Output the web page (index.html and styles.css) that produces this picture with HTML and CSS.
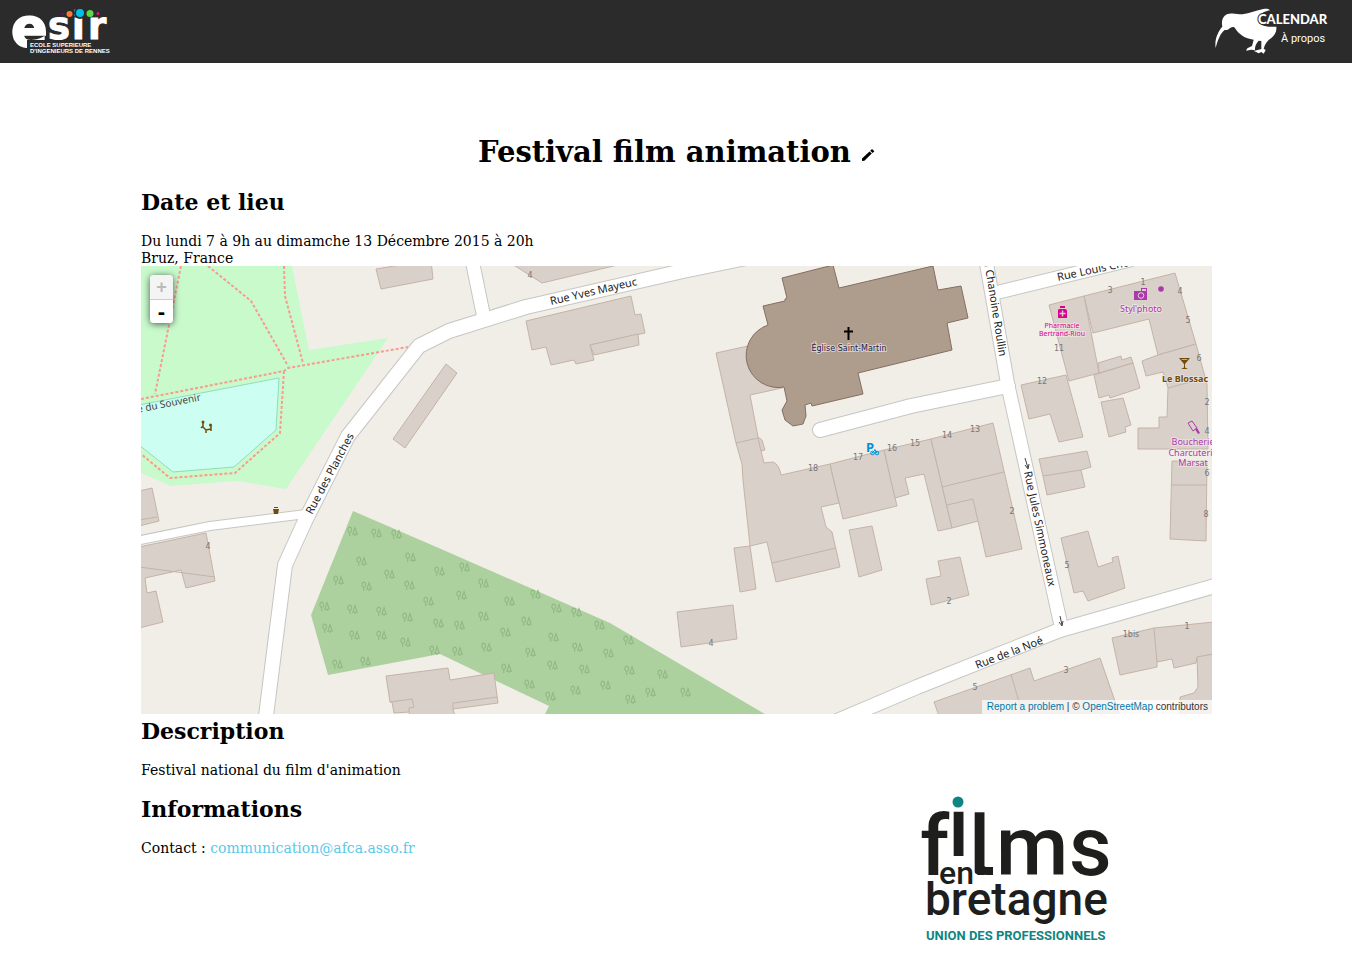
FILE: index.html
```html
<!DOCTYPE html>
<html lang="fr">
<head>
<meta charset="utf-8">
<meta name="viewport" content="width=device-width, initial-scale=1">
<title>Festival film animation</title>
<link rel="stylesheet" href="styles.css">
</head>
<body>
<header class="topbar">
  <a class="brand" href="#" aria-label="ESIR">
    <svg class="brand-logo" width="104" height="50" viewBox="10 6 104 50">
      <g class="esir-word">
        <text class="esir-e" x="11" y="46">e</text>
        <text class="esir-sir" y="39"><tspan x="48">s</tspan><tspan x="72">i</tspan><tspan x="88">r</tspan></text>
      </g>
      <rect class="bar-fill" x="27" y="40" width="86" height="14"/>
      <circle class="bar-fill" cx="80" cy="13" r="6"/>
      <circle cx="62.500" cy="14" r="1" fill="#7b1083"/>
      <circle cx="69.500" cy="14" r="3" fill="#ff7733"/>
      <circle cx="80" cy="13" r="4" fill="#00c0e8"/>
      <circle cx="90" cy="13.500" r="3.500" fill="#5cd846"/>
      <circle cx="98" cy="13.500" r="1.500" fill="#e5107c"/>
      <text class="esir-sub" x="30" y="47">ECOLE SUPERIEURE</text>
      <text class="esir-sub" x="30" y="53">D'INGENIEURS DE RENNES</text>
    </svg>
  </a>
  <a class="kiwi" href="#" aria-label="Calendar, à propos">
    <svg class="kiwi-logo" width="116" height="50" viewBox="1213 6 116 50">
      <path fill="#fff" transform="translate(1190 0) scale(.33333)" d="M77 144C73 118 84 94 97 80C93 62 99 43 118 41C134 38 146 44 158 43C178 41 200 30 220 27C230 25 238 27 240 31C220 34 203 46 205 60C207 75 222 82 259 80C261 95 254 106 244 114C232 122 225 131 221 146L227 150L221 161L214 156L206 160L192 153L214 147L214 123L206 122C198 130 194 140 195 151L184 149L168 152L172 145L186 138L191 119C164 116 147 104 133 82C122 76 118 92 104 90C90 101 83 122 77 144Z"/>
      <text class="kiwi-name" x="1258" y="24">CALENDAR</text>
      <text class="kiwi-about" x="1281" y="42">À propos</text>
    </svg>
  </a>
</header>

<main class="event">
  <h1 class="event-title">Festival film animation
    <button class="edit" type="button" aria-label="Modifier le titre"><svg width="14" height="14" viewBox="0 0 14 14"><path d="M1 10.500 8.500 3.500 10.800 5.600 3.400 12.700 1 13ZM9.200 2.800 11 1 13.400 3.200 11.500 5Z"/></svg></button>
  </h1>

  <section class="block">
    <h2 class="heading">Date et lieu</h2>
    <p class="text">Du lundi 7 à 9h au dimamche 13 Décembre 2015 à 20h<br>Bruz, France</p>
    <div class="map">
      <svg class="map-canvas" viewBox="141 266 1071 448" preserveAspectRatio="xMidYMid slice" role="img" aria-label="Carte de Bruz">
        <defs>
          <symbol id="trees" viewBox="0 0 10 10" width="11" height="11" overflow="visible">
            <path d="M2.500 9V5.500M7.300 9V7.500M2.500 1C.8 1 .8 3 .9 4C1 6.300 4 6.300 4.100 4C4.200 3 4.200 1 2.500 1ZM7.300 1.500 5.300 7.500H9.300Z" fill="none" stroke="#8fb882"/>
          </symbol>
        </defs>
        <path fill="#c8facc" d="M141 266H292L309 350 388 338 286 489 237 481 171 486 141 473Z"/>
        <path fill="#ccfff1" stroke="#8fdcc0" d="M139 405 279 378 276 430 234 467 173 472 139 445"/>
        <path fill="#add19e" d="M353 511 441 549 610 623 765 714H545L549 706 440 654 328 675 311 615Z"/>
        <g id="wood">
          <use href="#trees" x="347" y="526"/><use href="#trees" x="371" y="528"/><use href="#trees" x="391" y="529"/><use href="#trees" x="356" y="556"/><use href="#trees" x="405" y="552"/><use href="#trees" x="384" y="569"/><use href="#trees" x="333" y="575"/><use href="#trees" x="361" y="581"/><use href="#trees" x="404" y="580"/><use href="#trees" x="434" y="566"/><use href="#trees" x="319" y="601"/><use href="#trees" x="347" y="604"/><use href="#trees" x="376" y="606"/><use href="#trees" x="423" y="596"/><use href="#trees" x="402" y="612"/><use href="#trees" x="433" y="618"/><use href="#trees" x="322" y="623"/><use href="#trees" x="349" y="630"/><use href="#trees" x="376" y="630"/><use href="#trees" x="400" y="637"/><use href="#trees" x="429" y="645"/><use href="#trees" x="332" y="659"/><use href="#trees" x="360" y="656"/>
          <use href="#trees" x="459" y="562"/><use href="#trees" x="478" y="578"/><use href="#trees" x="456" y="590"/><use href="#trees" x="504" y="596"/><use href="#trees" x="530" y="589"/><use href="#trees" x="551" y="603"/><use href="#trees" x="571" y="607"/><use href="#trees" x="478" y="611"/><use href="#trees" x="521" y="616"/><use href="#trees" x="454" y="620"/><use href="#trees" x="500" y="627"/><use href="#trees" x="594" y="620"/><use href="#trees" x="548" y="632"/><use href="#trees" x="623" y="635"/><use href="#trees" x="481" y="642"/><use href="#trees" x="572" y="642"/><use href="#trees" x="452" y="646"/><use href="#trees" x="525" y="647"/><use href="#trees" x="603" y="648"/><use href="#trees" x="547" y="660"/><use href="#trees" x="501" y="663"/><use href="#trees" x="579" y="664"/><use href="#trees" x="624" y="665"/><use href="#trees" x="657" y="669"/><use href="#trees" x="524" y="679"/><use href="#trees" x="600" y="680"/><use href="#trees" x="570" y="685"/><use href="#trees" x="645" y="687"/><use href="#trees" x="680" y="687"/><use href="#trees" x="545" y="691"/><use href="#trees" x="625" y="694"/>
        </g>
        <g class="footpath">
          <path d="M181 266 155 394M208 266 251 301 288 366M284 266 285 296 303 363M141 399 284 371 288 368 408 347M284 371 280 433 235 473 170 478 141 454"/>
        </g>
        <g class="building">
          <path d="M376 269 431 260 433 279 381 289Z"/>
          <path d="M512 264 542 283 622 264Z"/>
          <path d="M526 321 631 296 635 315 641 314 645 333 590 345 594 360 576 364 574 360 551 365 546 347 532 350Z"/>
          <path d="M590 345 638 334 639 345 594 355Z"/>
          <path d="M393 439 405 448 457 373 446 364Z"/>
          <path d="M716 353 748 346 790 370 782 388 750 395 758 437 762 440 765 450 761 451 764 463 773 462Q779 464 781 475L830 464 839 503 821 507 826 527 832 532 840 567 776 582 767 542 750 546 743 480 742 464 736 443Z"/>
          <path class="seam" d="M736 443 758 438 761 451M772 563 836 548"/>
          <path d="M734 548 750 546 756 589 740 592Z"/>
          <path d="M830 464 884 450 897 506 843 519Z"/>
          <path d="M884 450 931 439 952 528 938 531 924 474 905 478 909 494 895 498Z"/>
          <path d="M931 439 993 423 1022 549 986 557 978 521 952 528Z"/>
          <path class="seam" d="M942 487 1004 472M947 505 973 499 978 521"/>
          <path d="M849 530 872 526 882 570 859 577Z"/>
          <path d="M938 561 960 557 969 595 931 605 926 579 941 576Z"/>
          <path d="M677 612 733 605 737 639 681 647Z"/>
          <path d="M386 676 448 668 450 680 494 673 498 703 453 709 455 716 410 716 409 712 394 713 392 702 390 702Z"/>
          <path class="seam" d="M390 702 412 699 414 707 409 708V712M453 709V703L497 697"/>
          <path d="M139 491 152 488 159 521 139 526Z"/>
          <path class="seam" d="M139 520 157 517"/>
          <path d="M139 547 206 533 215 581 186 588 181 570 145 578 147 593 156 591 163 622 139 628Z"/>
          <path class="seam" d="M139 567 215 577"/>
          <path d="M1049 305 1084 296 1099 373 1069 381Z"/>
          <path d="M1084 296 1175 273 1196 344 1158 355 1149 319 1093 333Z"/>
          <path d="M1098 363 1121 356 1122 360 1131 357 1133 363 1099 373Z"/>
          <path d="M1094 375 1133 363 1140 388 1110 398 1109 395 1099 398Z"/>
          <path d="M1101 402 1123 398 1131 425 1125 427 1126 432 1109 437Z"/>
          <path d="M1021 385 1066 375 1083 437 1059 442 1050 414 1029 419Z"/>
          <path d="M1142 361 1158 355 1196 344 1207 384 1208 449H1138V428H1159V417H1167L1168 388 1163 372 1146 376Z"/>
          <path class="seam" d="M1168 388 1205 378"/>
          <path d="M1172 461H1207L1206 541 1170 539Z"/>
          <path class="seam" d="M1172 485H1207"/>
          <path d="M1039 459 1087 451 1091 467 1081 470 1085 487 1047 495 1043 476Z"/>
          <path class="seam" d="M1043 476 1081 470"/>
          <path d="M1061 538 1088 531 1098 567 1113 562 1112 558 1118 556 1125 588 1088 601 1083 591 1074 593Z"/>
          <path d="M1112 638 1154 628 1214 622V654L1197 657 1196 663 1174 668 1172 659 1157 662V667L1120 675Z"/>
          <path class="seam" d="M1154 628 1157 662"/>
          <path d="M1214 654 1197 657 1198 687 1194 693 1180 697V716H1214Z"/>
          <path d="M934 702 1030 668 1034 681 1100 658 1117 707 1120 716H939Z"/>
          <path class="seam" d="M1011 674 1023 716"/>
        </g>
        <path class="church" d="M782 278 833 265 839 288 933 266 938 290 961 286 968 318 947 323 952 350 858 373 863 394 812 406 811 403 805 405 806 416 803 424 793 426 785 420 782 410 787 401 784 387A32.100 32.100 0 0 1 768 325L763 306 785 301V299L787 298Z"/>
        <g class="road road-case">
          <path class="w-main" d="M265 724 285 565 306 519 348 436 419 346 449 331 526 307 683 271 770 253"/>
          <path class="w-mid" d="M471 255 484 318M985 255 1008 386 1062 630M995 293 1130 260"/>
          <path class="w-small" d="M131 542 210 526 306 514"/>
          <path class="w-main" d="M820 430 911 406 1008 386M830 724 917 687 1060 630 1222 584"/>
        </g>
        <g class="road road-fill">
          <path class="w-main" d="M265 724 285 565 306 519 348 436 419 346 449 331 526 307 683 271 770 253"/>
          <path class="w-mid" d="M471 255 484 318M985 255 1008 386 1062 630M995 293 1130 260"/>
          <path class="w-small" d="M131 542 210 526 306 514"/>
          <path class="w-main" d="M820 430 911 406 1008 386M830 724 917 687 1060 630 1222 584"/>
        </g>
        <g class="street">
          <text transform="translate(551 305) rotate(-13)">Rue Yves Mayeuc</text>
          <text transform="translate(312 515) rotate(-62)">Rue des Planches</text>
          <text transform="translate(1058 281) rotate(-12)">Rue Louis Chevalier</text>
          <text transform="translate(983 254) rotate(81)">du Chanoine Roullin</text>
          <text transform="translate(1024 472) rotate(78)">Rue Jules Simmoneaux</text>
          <text transform="translate(977 669) rotate(-21)">Rue de la Noé</text>
          <text class="path-name" transform="translate(121 416) rotate(-11)">Allée du Souvenir</text>
        </g>
        <path class="arrow" d="M1025 458 1028 468M1025 465 1028 469 1029 464M1060 616 1062 625M1059 622 1062 626 1063 621"/>
        <g class="number">
          <text x="530" y="278">4</text><text x="208" y="549">4</text><text x="711" y="646">4</text>
          <text x="813" y="471">18</text><text x="858" y="460">17</text><text x="892" y="451">16</text><text x="915" y="446">15</text><text x="947" y="438">14</text><text x="975" y="432">13</text>
          <text x="1012" y="514">2</text><text x="949" y="604">2</text><text x="1067" y="568">5</text><text x="1042" y="384">12</text><text x="1059" y="351">11</text>
          <text x="1110" y="293">3</text><text x="1143" y="285">1</text><text x="1180" y="294">4</text><text x="1188" y="323">5</text><text x="1199" y="361">6</text><text x="1207" y="405">2</text><text x="1207" y="434">4</text><text x="1207" y="476">6</text><text x="1206" y="517">8</text>
          <text x="1131" y="637">1bis</text><text x="1187" y="629">1</text><text x="1066" y="673">3</text><text x="975" y="690">5</text>
        </g>
        <path d="M848.500 327V340M844 331.500H853" stroke="#000" stroke-width="2" fill="none"/>
        <text class="poi poi-church" x="849" y="351">Église Saint-Martin</text>
        <g class="c-pharmacy">
          <path fill-rule="evenodd" d="M1060 306H1065V308H1060ZM1058 310Q1058 309 1060 309H1065Q1067 309 1067 311V318H1058ZM1061.800 310.500V312.800H1059.500V314.300H1061.800V316.500H1063.300V314.300H1065.600V312.800H1063.300V310.500Z"/>
          <text class="poi poi-small" x="1062" y="328">Pharmacie</text>
          <text class="poi poi-small" x="1062" y="336">Bertrand-Riou</text>
        </g>
        <g class="c-shop">
          <path d="M1134 291H1141V288H1147V300H1134Z"/>
          <path fill="#d9d0c9" d="M1142 289H1146V291H1142Z"/>
          <circle cx="1141" cy="295.500" r="2.800" fill="none" stroke="#e6d3e2"/>
          <circle cx="1161" cy="289" r="2.800"/>
          <text class="poi poi-mid" x="1141" y="312">Styl'photo</text>
          <path fill="none" stroke="#ac39ac" d="M1188 423 1192 421 1197 428 1193 431Z"/>
          <path d="M1195 429 1197 428 1200 433 1198 434Z"/>
          <text class="poi poi-mid" x="1193" y="445">Boucherie</text>
          <text class="poi poi-mid" x="1193" y="456">Charcuterie</text>
          <text class="poi poi-mid" x="1193" y="466">Marsat</text>
        </g>
        <g class="c-bar">
          <path fill-rule="evenodd" d="M1179 358H1190L1185 364V367.500L1188 369H1181L1184 367.500V364ZM1181.500 359.300 1182 360H1187L1187.500 359.300Z"/>
          <text class="poi poi-bold" x="1185" y="382">Le Blossac</text>
          <path d="M273 509H279L278 514H274ZM274 507H278V508H274Z"/>
          <path fill="none" stroke="#734a08" stroke-width="1.500" d="M203 422V426L201 428M203 427 206 430 211 429M211 425V431M206 430V433"/>
          <circle cx="203" cy="422" r="1.500"/><circle cx="210.500" cy="425" r="1.500"/>
        </g>
        <text class="parking" x="866" y="452">P</text>
        <g fill="none" stroke="#0092da"><circle cx="872.500" cy="453" r="1.800"/><circle cx="877" cy="453" r="1.800"/><path d="M872 453 875 450 877 453M874 450H876"/></g>
      </svg>
      <div class="zoom">
        <button class="zoom-btn" type="button" aria-label="Zoom avant" disabled>+</button>
        <button class="zoom-btn" type="button" aria-label="Zoom arrière">-</button>
      </div>
      <div class="credit"><a href="#">Report a problem</a> | © <a href="#">OpenStreetMap</a> contributors</div>
    </div>
  </section>

  <section class="block block-desc">
    <h2 class="heading">Description</h2>
    <p class="text">Festival national du film d'animation</p>
  </section>

  <section class="block block-info">
    <div class="info">
      <h2 class="heading">Informations</h2>
      <p class="text">Contact : <a class="mail" href="mailto:communication@afca.asso.fr">communication@afca.asso.fr</a></p>
    </div>
    <svg class="partner" width="200" height="160" viewBox="915 788 200 160" role="img" aria-label="Films en Bretagne">
      <g class="films">
        <text x="920" y="875">f</text>
        <text x="948" y="856">i</text>
        <text x="969" y="875">l</text>
        <text x="996" y="875">m</text>
        <text x="1069" y="875">s</text>
      </g>
      <rect x="951" y="790" width="19" height="21" fill="#fff"/>
      <path d="M979 858V863Q979 871 987 871H993" fill="none" stroke="#1e1e1c" stroke-width="8"/>
      <path d="M972 866Q973 875 982 876H972Z" fill="#fff"/>
      <circle cx="958" cy="802" r="5.500" fill="#0d8583"/>
      <text class="films-en" x="939" y="884">en</text>
      <text class="films-bzh" x="925" y="915">bretagne</text>
      <text class="films-union" x="926" y="940">UNION DES PROFESSIONNELS</text>
    </svg>
  </section>
</main>
</body>
</html>
```
FILE: styles.css
```css
* { box-sizing: border-box; }

body {
  margin: 0;
  background: #fff;
  color: #000;
  font: 14px/17px "DejaVu Serif", serif;
}

a { text-decoration: none; }
button { border: 0; padding: 0; cursor: pointer; }
svg { display: block; overflow: visible; }

/* Top bar */
.topbar {
  display: flex;
  justify-content: space-between;
  align-items: flex-start;
  height: 63px;
  padding: 6px 23px 0 10px;
  background: #2b2b2b;
}
.bar-fill { fill: #2b2b2b; }
.esir-word { fill: #fff; font-family: "DejaVu Sans", sans-serif; font-weight: 700; stroke: #fff; }
.esir-e { font-size: 54px; stroke-width: 2px; }
.esir-sir { font-size: 37px; stroke-width: 1px; }
.esir-sub { fill: #fff; font: 700 6px "Liberation Sans", sans-serif; }
.kiwi-name { fill: #fff; font: 900 13px Lato, sans-serif; stroke: #2b2b2b; stroke-width: 2px; paint-order: stroke; }
.kiwi-about { fill: #fff; font: 11px Roboto, sans-serif; }

/* Event */
.event { padding: 71px 140px 24px 141px; }
.event-title {
  margin: 0 0 20px;
  font-size: 29px;
  line-height: 36px;
  text-align: center;
}
.edit { background: none; }
.heading { margin: 0 0 19px; font-size: 22px; line-height: 24px; }
.text { margin: 0; }
.block-desc { padding-top: 5px; }
.block-info { display: flex; justify-content: space-between; padding: 9px 97px 0 0; }
.info { padding-top: 9px; }
.mail { color: #5bc8e8; }

/* Map */
.map { position: relative; height: 448px; margin-top: -1px; overflow: hidden; background: #f1eee8; }
.map-canvas { width: 100%; height: 100%; overflow: hidden; }
.building { fill: #d9d0c9; stroke: #c4b3a8; }
.seam { fill: none; }
.church { fill: #ae9c8c; stroke: #846f62; }
.footpath { fill: none; stroke: #fa9a90; stroke-width: 2px; stroke-dasharray: 3 2; }
.road { fill: none; stroke-linecap: round; stroke-linejoin: round; }
.road-case { stroke: #c6c6c4; }
.road-fill { stroke: #fff; }
.road-case .w-main { stroke-width: 16px; }
.road-case .w-mid { stroke-width: 15px; }
.road-case .w-small { stroke-width: 10px; }
.road-fill .w-main { stroke-width: 14px; }
.road-fill .w-mid { stroke-width: 13px; }
.road-fill .w-small { stroke-width: 8px; }
.street { fill: #222; font: 11px "Noto Sans", sans-serif; }
.path-name { font-size: 10px; fill: #444; }
.arrow { fill: none; stroke: #444; }
.number { fill: #777; font: 8px "DejaVu Sans", sans-serif; text-anchor: middle; }
.poi { text-anchor: middle; font-family: "Noto Sans", sans-serif; stroke: #f1eee8; stroke-opacity: .6; stroke-width: 2px; paint-order: stroke; }
.poi-church { fill: #22204f; font-size: 8px; font-family: "DejaVu Sans", sans-serif; }
.poi-small { font-size: 7px; }
.poi-mid { font-size: 9px; }
.poi-bold { font-size: 9px; font-weight: 700; }
.c-pharmacy { fill: #da0092; }
.c-shop { fill: #ac39ac; }
.c-bar { fill: #734a08; }
.parking { fill: #0092da; font: 700 13px "Noto Sans", sans-serif; }

.zoom {
  position: absolute;
  top: 9px;
  left: 9px;
  display: flex;
  flex-direction: column;
  border-radius: 4px;
  overflow: hidden;
  width: 23px;
  background: #fff;
  box-shadow: 0 1px 7px rgba(0, 0, 0, .65);
}
.zoom-btn { height: 23px; background: #fff; color: #000; font: 700 22px/23px "Liberation Sans", sans-serif; }
.zoom-btn:disabled { height: 25px; background: #f4f4f4; color: #bbb; border-bottom: 1px solid #ccc; font-size: 18px; }
.credit {
  position: absolute;
  right: 0;
  bottom: 0;
  padding: 0 4px 1px 5px;
  background: rgba(255, 255, 255, .7);
  color: #333;
  font: 10px/13px "Liberation Sans", sans-serif;
}
.credit a { color: #0078a8; }

/* Partner logo */
.films { fill: #1e1e1c; font: 500 83px Roboto, sans-serif; }
.films-en { fill: #1e1e1c; font: 500 32px Roboto, sans-serif; }
.films-bzh { fill: #1e1e1c; font: 500 46px Roboto, sans-serif; }
.films-union { fill: #0d8583; font: 700 13px Roboto, sans-serif; }
```
